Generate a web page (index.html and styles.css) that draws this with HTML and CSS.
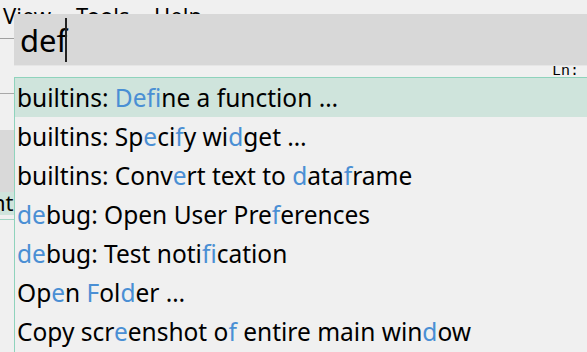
FILE: index.html
```html
<!DOCTYPE html>
<html lang="en">
<head>
  <meta charset="UTF-8" />
  <title>Command palette</title>
  <link rel="stylesheet" href="styles.css">
</head>
<body>
  <div class="app">
    <div class="menubar">
      <span class="menu-view">View</span>
      <span class="menu-tools">Tools</span>
      <span>Help</span>
    </div>
    <div class="side">
      <div class="side-toolbar"></div>
      <div class="side-tab"></div>
      <div class="side-active">nt</div>
      <div class="side-rule"></div>
    </div>
  </div>

  <div class="palette">
    <div class="search">def<span class="caret"></span></div>
    <div class="status">Ln:</div>
    <ul class="results">
      <li class="selected">builtins: <b>Def</b>ine a function …</li>
      <li>builtins: Sp<b>e</b>ci<b>f</b>y wi<b>d</b>get …</li>
      <li>builtins: Conv<b>e</b>rt text to <b>d</b>ata<b>f</b>rame</li>
      <li><b>de</b>bug: Open User Pre<b>f</b>erences</li>
      <li><b>de</b>bug: Test noti<b>f</b>ication</li>
      <li>Op<b>e</b>n <b>F</b>ol<b>d</b>er …</li>
      <li>Copy scr<b>e</b>enshot o<b>f</b> entire main win<b>d</b>ow</li>
    </ul>
  </div>
</body>
</html>
```

FILE: styles.css
```css
body {
  margin: 0;
  width: 587px;
  height: 352px;
  overflow: hidden;
  position: relative;
  background-color: #f0f0f0;
  color: #000000;
  font-family: "Noto Sans", "Open Sans", sans-serif;
}

.app {
  display: flex;
  flex-direction: column;
}

.menubar {
  display: flex;
  padding-left: 3px;
  height: 38px;
  font-size: 22px;
  line-height: 31px;
  border-bottom: 1px solid #a0a0a0;
}

.menu-view {
  width: 73px;
}

.menu-tools {
  width: 78px;
}

.side {
  display: flex;
  flex-direction: column;
  width: 14px;
}

.side-toolbar {
  height: 54px;
  border-bottom: 1px solid #a8a8a8;
}

.side-tab {
  margin-top: 36px;
  height: 62px;
  background-color: #d9d9d9;
}

.side-active {
  height: 23px;
  background-color: #cfe4dc;
  font-size: 22px;
  line-height: 20px;
  text-indent: -8px;
  overflow: hidden;
  white-space: nowrap;
}

.side-rule {
  margin-top: 4px;
  border-top: 1px solid #9fd6c2;
}

/* popup sits on top of the editor */
.palette {
  position: absolute;
  top: 14px;
  left: 14px;
  right: 0;
  bottom: 0;
  display: flex;
  flex-direction: column;
}

.search {
  height: 51px;
  background-color: #d8d8d8;
  border-bottom: 1px solid #e6e6e6;
  padding-left: 6px;
  font-size: 31px;
  line-height: 50px;
  display: flex;
  align-items: center;
}

.caret {
  display: inline-block;
  width: 2px;
  height: 44px;
  margin-left: -2px;
  background-color: #222222;
}

.status {
  height: 11px;
  text-align: right;
  padding-right: 8px;
  font-family: "Liberation Mono", monospace;
  font-size: 15px;
  line-height: 11px;
  overflow: hidden;
}

.results {
  list-style: none;
  margin: 0;
  padding: 0;
  flex: 1;
  border-top: 1px solid #8fd3bc;
  border-left: 1px solid #8fd3bc;
}

.results li {
  height: 39px;
  padding-left: 2px;
  font-size: 24.5px;
  line-height: 39px;
  white-space: nowrap;
}

.results li.selected {
  background-color: #cfe4dc;
}

.results b {
  font-weight: normal;
  color: #4a8fd4;
}
```
